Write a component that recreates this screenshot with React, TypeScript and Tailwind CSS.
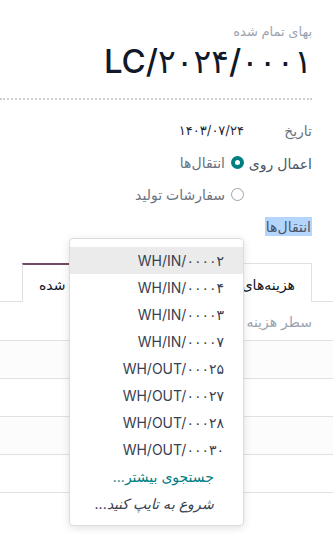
import React from "react";

const items = [
  "WH/IN/۰۰۰۰۲",
  "WH/IN/۰۰۰۰۴",
  "WH/IN/۰۰۰۰۳",
  "WH/IN/۰۰۰۰۷",
  "WH/OUT/۰۰۰۲۵",
  "WH/OUT/۰۰۰۲۷",
  "WH/OUT/۰۰۰۲۸",
  "WH/OUT/۰۰۰۳۰",
];

export default function App() {
  return (
    <div
      dir="rtl"
      className="relative h-[534px] w-[333px] overflow-hidden bg-white text-[14px] text-[#374151]"
      style={{ fontFamily: "Inter, 'DejaVu Sans', sans-serif" }}
    >
      <div className="pr-[21px] pt-[22px]">
        <div className="text-[13px] leading-[18px] text-[#9ca3af]">بهای تمام شده</div>
        <h1 className="mt-[2px] text-[33px] font-medium leading-[38px] text-[#111827]">
          LC/۲۰۲۴/۰۰۰۱
        </h1>
        <div className="mt-[18px] border-b-2 border-dotted border-[#cfcfcf]" />

        <div className="mt-[20px] flex items-center">
          <div className="w-[68px] text-[14px] text-[#6b7280]">تاریخ</div>
          <div className="text-[13px] text-[#1f2937]">۱۴۰۳/۰۷/۲۴</div>
        </div>

        <div className="mt-[10px] flex">
          <div className="w-[68px] pt-[2px] text-[14px] text-[#4b5563]">اعمال روی</div>
          <div className="flex flex-col gap-[10px]">
            <label className="flex h-[22px] items-center gap-[6px] text-[#6b7280]">
              <span className="h-[13px] w-[13px] rounded-full border-[4px] border-[#017e84] bg-white" />
              <span>انتقال‌ها</span>
            </label>
            <label className="flex h-[22px] items-center gap-[6px] text-[#6b7280]">
              <span className="h-[13px] w-[13px] rounded-full border border-[#9ca3af] bg-white" />
              <span>سفارشات تولید</span>
            </label>
          </div>
        </div>

        <div className="mt-[12px] flex">
          <span className="bg-[#b4d5fe] px-[1px] py-[1px] leading-[17px] text-[#4b5563]">انتقال‌ها</span>
        </div>
      </div>

      <div className="mt-[27px] flex border-b border-[#dee2e6] pr-[21px]">
        <div className="mb-[-1px] h-[39px] w-[100px] shrink-0 overflow-hidden whitespace-nowrap border-x border-t border-[#dee2e6] bg-white pr-[16px] pt-[10px] text-[#111827]">
          هزینه‌های اضافی
        </div>
        <div className="mb-[-1px] h-[39px] w-[190px] shrink-0 overflow-hidden whitespace-nowrap border-x border-t-2 border-x-[#dee2e6] border-t-[#714b67] bg-white pl-[16px] pt-[9px] text-left text-[#111827]">
          تعدیل‌های ارزش‌گذاری شده
        </div>
      </div>

      <div>
        <div className="flex h-[39px] items-center border-b border-[#dee2e6] pr-[21px] text-[#9ca3af]">
          سطر هزینه
        </div>
        {[0, 1, 2, 3].map((i) => (
          <div
            key={i}
            className={`h-[38px] border-b border-[#dee2e6] ${i % 2 === 0 ? "bg-[#fcfcfc]" : "bg-white"}`}
          />
        ))}
      </div>

      <div className="absolute left-[69px] top-[238px] w-[175px] rounded-[4px] border border-[#dcdcdc] bg-white pb-[8px] pt-[8px] shadow-[0_2px_8px_rgba(0,0,0,0.12)]">
        {items.map((it, i) => (
          <div
            key={it}
            className={`flex h-[27px] items-center pr-[19px] text-[14px] text-[#374151] ${i === 0 ? "bg-[#ebebeb]" : ""}`}
          >
            {it}
          </div>
        ))}
        <div className="flex h-[27px] items-center pr-[29px] text-[14px] text-[#017e84]">جستجوی بیشتر...</div>
        <div className="flex h-[27px] items-center pr-[29px] text-[14px] italic text-[#374151]">شروع به تایپ کنید...</div>
      </div>
    </div>
  );
}
